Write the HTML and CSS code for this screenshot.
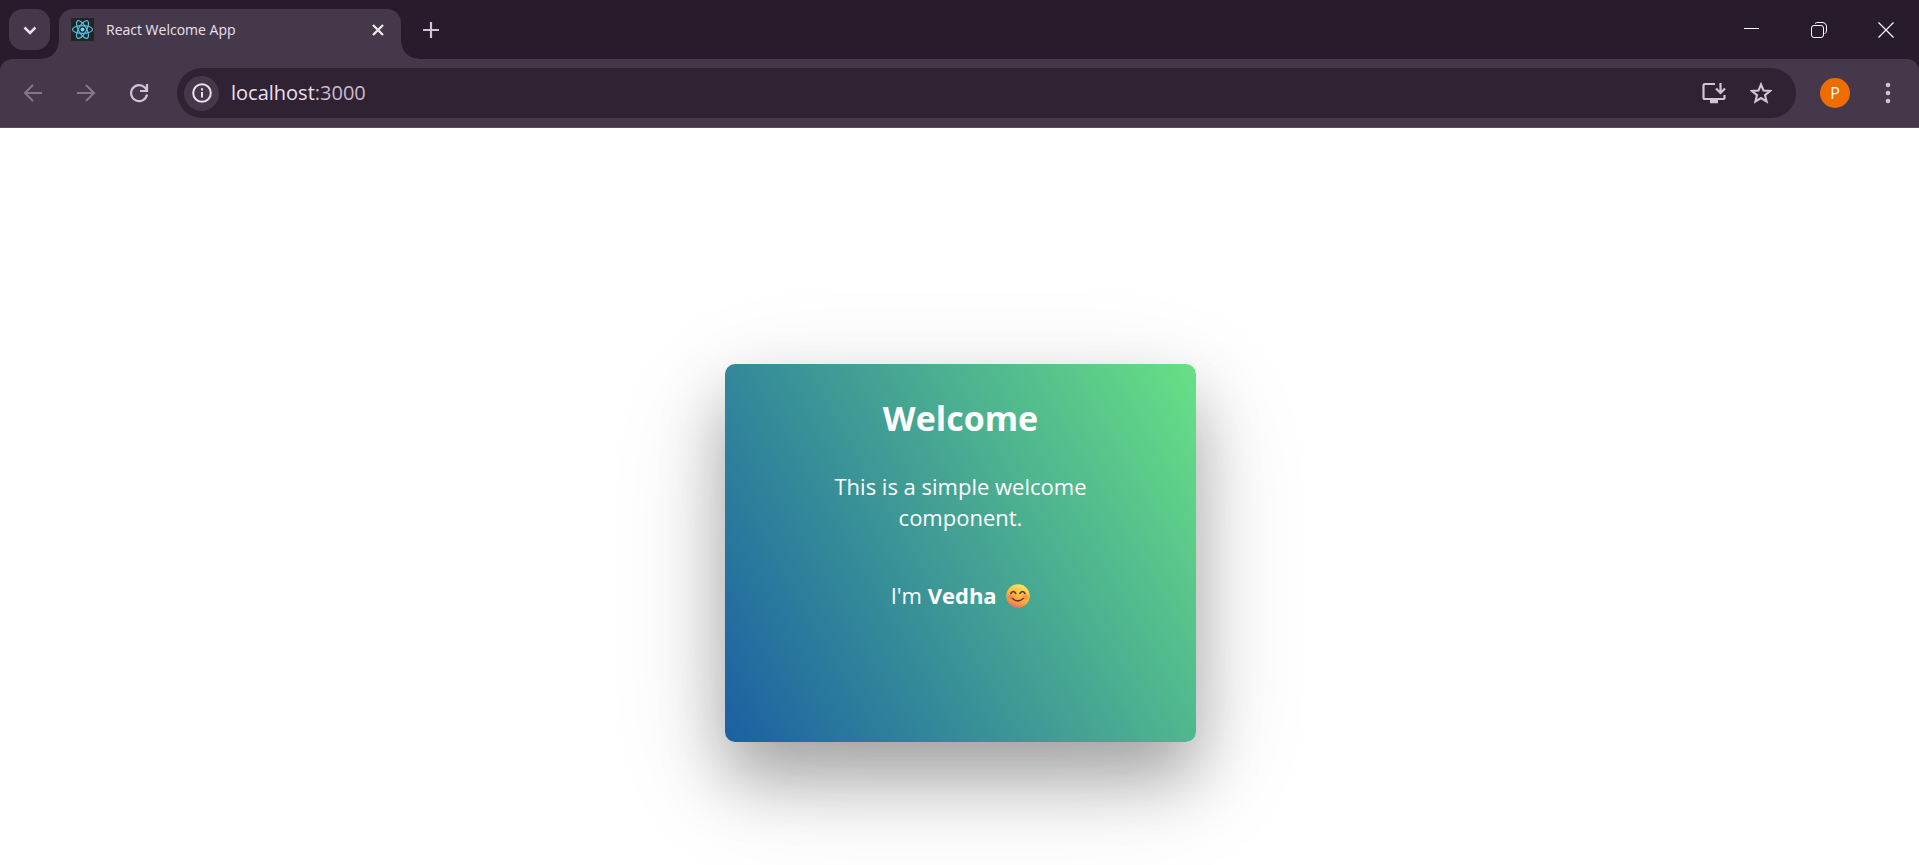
FILE: index.html
```html
<!DOCTYPE html>
<html lang="en">
<head>
<meta charset="utf-8">
<title>React Welcome App</title>
<link rel="stylesheet" href="styles.css">
</head>
<body>
<header class="browser">
  <div class="tab-strip">
    <button class="tab-search" aria-label="Search tabs">
      <svg width="14" height="14" viewBox="0 0 14 14"><path d="M1.500 4.500L7 10l5.500-5.500" fill="none" stroke="#ece0ee" stroke-width="2.500"/></svg>
    </button>
    <div class="tab">
      <svg class="favicon" width="23" height="23" viewBox="0 0 23 23">
        <rect width="23" height="23" rx="1" fill="#222426"/>
        <g fill="none" stroke="#53c1de" stroke-width="1.2">
          <ellipse cx="11.5" cy="11.5" rx="10" ry="3.9"/>
          <ellipse cx="11.5" cy="11.5" rx="10" ry="3.9" transform="rotate(60 11.5 11.5)"/>
          <ellipse cx="11.5" cy="11.5" rx="10" ry="3.9" transform="rotate(120 11.5 11.5)"/>
        </g>
        <circle cx="11.5" cy="11.5" r="2" fill="#61dafb"/>
      </svg>
      <span class="tab-title">React Welcome App</span>
      <button class="tab-close" aria-label="Close tab">
        <svg width="12" height="12" viewBox="0 0 12 12"><path d="M1 1l10 10M11 1L1 11" stroke="#f0e6ef" stroke-width="2.3"/></svg>
      </button>
    </div>
    <button class="new-tab" aria-label="New tab">
      <svg width="16" height="16" viewBox="0 0 16 16"><path d="M8 0v16M0 8h16" stroke="#d5bfdb" stroke-width="2.2"/></svg>
    </button>
    <div class="window-controls">
      <button aria-label="Minimize"><svg width="16" height="16" viewBox="0 0 16 16"><path d="M0 6.500h15" stroke="#fff"/></svg></button>
      <button aria-label="Restore"><svg width="16" height="16" viewBox="0 0 16 16" fill="none" stroke="#fff"><rect x=".5" y="3.500" width="12" height="12" rx="2.500"/><path d="M4 1.500q1-1 3-1h4q4.500 0 4.500 4.500v3q0 3-2 4"/></svg></button>
      <button aria-label="Close"><svg width="16" height="16" viewBox="0 0 16 16"><path d="M.5.5l15 15M15.500.5l-15 15" stroke="#fff" stroke-width="1.200"/></svg></button>
    </div>
  </div>
  <div class="toolbar">
    <nav class="nav-buttons">
      <button aria-label="Back"><svg width="20" height="20" viewBox="0 0 20 20"><path d="M19 10H2M10 2l-8 8 8 8" fill="none" stroke="#86788a" stroke-width="2"/></svg></button>
      <button aria-label="Forward"><svg width="20" height="20" viewBox="0 0 20 20"><path d="M1 10h17M10 2l8 8-8 8" fill="none" stroke="#86788a" stroke-width="2"/></svg></button>
      <button aria-label="Reload"><svg width="20" height="20" viewBox="0 0 20 20"><path d="M18 11.500A8 8 0 1 1 15.800 4.500L18 7" fill="none" stroke="#d5bfdb" stroke-width="2.200"/><path d="M18 1v7h-7" fill="none" stroke="#d5bfdb" stroke-width="2.200"/></svg></button>
    </nav>
    <div class="omnibox">
      <button class="site-info" aria-label="Site information"><svg width="20" height="20" viewBox="0 0 20 20"><circle cx="10" cy="10" r="8.800" fill="none" stroke="#ece0ee" stroke-width="2"/><path d="M10 9v5.500M10 5.300v2.200" stroke="#ece0ee" stroke-width="2"/></svg></button>
      <div class="url" role="textbox" aria-label="Address">localhost<span class="port">:3000</span></div>
      <button aria-label="Install app"><svg width="24" height="22" viewBox="0 0 24 22" fill="none" stroke="#d3c4d4" stroke-width="2.200"><path d="M13 2H3q-1.500 0-1.500 1.500v12Q1.500 17 3 17h18q1.500 0 1.500-1.500V13"/><path d="M18.500 1v9M14 6.500l4.500 4.500L23 6.500"/><path d="M8 19.500h8" stroke-width="3.500"/></svg></button>
      <button aria-label="Bookmark this tab"><svg width="22" height="22" viewBox="0 0 22 22"><path d="M11 2.500l2.500 6 6.500.5-5 4.200 1.600 6.300L11 16.100l-5.600 3.400L7 13.200 2 9l6.500-.5z" fill="none" stroke="#d3c4d4" stroke-width="2.100"/></svg></button>
    </div>
    <button class="profile" aria-label="Profile">P</button>
    <button class="menu" aria-label="Menu"><svg width="6" height="22" viewBox="0 0 6 22" fill="#d5bfdb"><circle cx="3" cy="3" r="2.300"/><circle cx="3" cy="11" r="2.300"/><circle cx="3" cy="19" r="2.300"/></svg></button>
  </div>
</header>
<main class="page">
  <section class="card">
    <h1>Welcome</h1>
    <p>This is a simple welcome component.</p>
    <p class="signature">I'm <strong>Vedha</strong>
      <svg class="emoji" role="img" aria-label="Smiling face" width="24" height="24" viewBox="0 0 24 24">
        <defs>
          <linearGradient id="face" x1=".75" y1=".05" x2=".35" y2="1"><stop offset="0" stop-color="#ffe45c"/><stop offset=".5" stop-color="#ffb83d"/><stop offset=".8" stop-color="#f8933e"/><stop offset="1" stop-color="#e9668c"/></linearGradient>
          <radialGradient id="blush"><stop offset="0" stop-color="#f8664e" stop-opacity=".7"/><stop offset="1" stop-color="#f8664e" stop-opacity="0"/></radialGradient>
        </defs>
        <circle cx="12" cy="12" r="11.700" fill="url(#face)"/>
        <circle cx="4.500" cy="13" r="4" fill="url(#blush)"/><circle cx="19.500" cy="13" r="4" fill="url(#blush)"/>
        <path d="M4.800 9.500q2.500-4.200 5 0M14 9.500q2.500-4.200 5 0M6.500 14.500q5.300 4.800 10.700 0" fill="none" stroke="#643440" stroke-width="1.500" stroke-linecap="round"/>
      </svg>
    </p>
  </section>
</main>
</body>
</html>
```
FILE: styles.css
```css
* { box-sizing: border-box; }

body {
  margin: 0;
  min-height: 100vh;
  display: flex;
  flex-direction: column;
  font-family: "Open Sans", "Noto Sans", sans-serif;
  background: #fff;
  overflow: hidden;
}

button {
  display: flex;
  align-items: center;
  justify-content: center;
  border: 0;
  padding: 0;
  background: none;
  color: inherit;
  font: inherit;
  flex-shrink: 0;
}

.browser { background: #281b2b; color: #ece0ee; }

.tab-strip {
  display: flex;
  align-items: flex-start;
  height: 59px;
  padding: 9px 0 0 9px;
}

.tab-search {
  width: 41px;
  height: 41px;
  border-radius: 14px;
  background: #45384a;
}

.tab {
  position: relative;
  display: flex;
  align-items: center;
  width: 342px;
  height: 50px;
  margin-left: 9px;
  padding: 0 11px 9px 12px;
  border-radius: 14px 14px 0 0;
  background: #45384a;
}

.tab::before,
.tab::after {
  content: "";
  position: absolute;
  bottom: 0;
  width: 17px;
  height: 17px;
}

.tab::before {
  right: 100%;
  background: radial-gradient(circle at 0 0, transparent 16px, #45384a 17px);
}

.tab::after {
  left: 100%;
  background: radial-gradient(circle at 100% 0, transparent 16px, #45384a 17px);
}

.tab-title {
  flex: 1;
  margin-left: 12px;
  font-size: 14px;
}

.tab-close { width: 24px; height: 24px; }
.new-tab { width: 40px; height: 41px; margin-left: 10px; }

.window-controls { display: flex; margin-left: auto; }
.window-controls button { width: 67px; height: 41px; }

.toolbar {
  display: flex;
  align-items: center;
  height: 69px;
  padding: 0 19px 0 8px;
  border-radius: 12px 12px 0 0;
  background: #45384a;
  border-bottom: 1px solid #594d58;
}

.nav-buttons { display: flex; gap: 3px; }
.nav-buttons button { width: 50px; height: 50px; }

.omnibox {
  flex: 1;
  display: flex;
  align-items: center;
  gap: 24px;
  height: 50px;
  margin-left: 13px;
  padding: 0 24px 0 7px;
  border-radius: 25px;
  background: #2f2233;
}

.site-info {
  width: 35px;
  height: 35px;
  border-radius: 50%;
  background: #45384a;
}

.url { flex: 1; margin-left: -12px; padding-bottom: 2px; font-size: 20px; }
.port { color: #cbbccb; }

.profile {
  width: 30px;
  height: 30px;
  margin-left: 24px;
  border-radius: 50%;
  background: #ef6c00;
  color: #fff;
  font-size: 16px;
}

.menu { width: 24px; height: 40px; margin-left: 26px; }

.page {
  flex: 1;
  display: flex;
  align-items: center;
  justify-content: center;
  padding: 112px 0 0 2px;
}

.card {
  width: 471px;
  min-height: 378px;
  padding: 30px 96px;
  border-radius: 10px;
  background: linear-gradient(60deg, #1b5fa3, #68e085);
  box-shadow:
    0 36px 120px rgba(0, 0, 0, 0.14),
    0 36px 64px rgba(0, 0, 0, 0.28);
  color: #fff;
  font-size: 22px;
  line-height: 31px;
  text-align: center;
}

.card h1 { margin: 0; font-size: 34px; line-height: 48px; }
.card p { margin: 29px 0 0; }
.card .signature { margin-top: 47px; }
.emoji { margin-left: 4px; vertical-align: -4px; }
```
